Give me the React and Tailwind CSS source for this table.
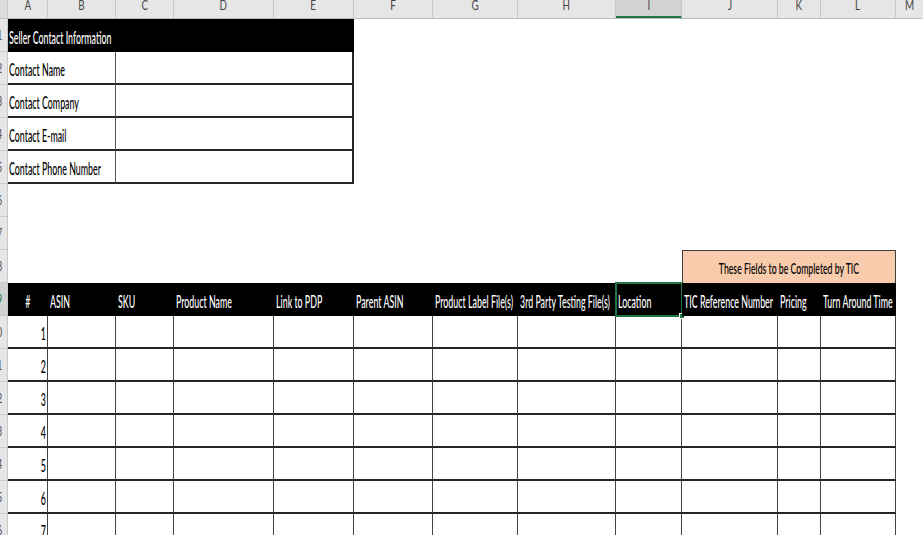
import React from 'react';

const cols = [
  { k: 'A', w: 'w-[40px]' },
  { k: 'B', w: 'w-[68px]' },
  { k: 'C', w: 'w-[58px]' },
  { k: 'D', w: 'w-[100px]' },
  { k: 'E', w: 'w-[80px]' },
  { k: 'F', w: 'w-[79px]' },
  { k: 'G', w: 'w-[85px]' },
  { k: 'H', w: 'w-[98px]' },
  { k: 'I', w: 'w-[66px]' },
  { k: 'J', w: 'w-[96px]' },
  { k: 'K', w: 'w-[43px]' },
  { k: 'L', w: 'w-[75px]' },
];

const headers = [
  { label: '#', align: 'center' },
  { label: 'ASIN' },
  { label: 'SKU' },
  { label: 'Product Name' },
  { label: 'Link to PDP' },
  { label: 'Parent ASIN' },
  { label: 'Product Label File(s)' },
  { label: '3rd Party Testing File(s)' },
  { label: 'Location', selected: true },
  { label: 'TIC Reference Number' },
  { label: 'Pricing' },
  { label: 'Turn Around Time' },
];

const contactRows = ['Contact Name', 'Contact Company', 'Contact E-mail', 'Contact Phone Number'];

const font = { fontFamily: 'Lato, "Liberation Sans", sans-serif' };

const Txt = ({ children, className = '' }) => (
  <span className={`inline-block whitespace-nowrap leading-none ${className}`}>{children}</span>
);

const RowHead = ({ n, active }) => (
  <div
    className={`w-[8px] shrink-0 h-full flex justify-end items-center overflow-hidden pr-[5px] border-b border-r border-[#c8c8c8] ${
      active ? 'bg-[#d2d2d2] text-[#217346]' : 'bg-[#e6e6e6] text-[#555]'
    }`}
  >
    <Txt className="text-[14px] scale-x-[0.6] origin-right">{n}</Txt>
  </div>
);

const Row = ({ n, active, children }) => (
  <div className="flex h-[33px] shrink-0">
    <RowHead n={n} active={active} />
    {children}
  </div>
);

export default function App() {
  return (
    <div className="w-[923px] h-[535px] overflow-hidden bg-white flex flex-col font-medium" style={font}>
      {/* column letters */}
      <div className="flex h-[19px] shrink-0 bg-[#e6e6e6] border-b border-[#bdbdbd]">
        <div className="w-[8px] shrink-0 border-r border-[#c8c8c8] bg-[#dcdcdc]" />
        {cols.map((c) => (
          <div
            key={c.k}
            className={`${c.w} shrink-0 flex justify-center items-start overflow-hidden border-r border-[#c8c8c8] text-[#444] ${
              c.k === 'I' ? 'bg-[#d2d2d2] border-b-2 border-b-[#217346]' : ''
            }`}
          >
            <Txt className="text-[14px] -mt-[2px] scale-x-[0.7] font-normal">{c.k}</Txt>
          </div>
        ))}
        <div className="flex-1 flex justify-center items-start overflow-hidden text-[#444]">
          <Txt className="text-[14px] -mt-[2px] scale-x-[0.7] font-normal">M</Txt>
        </div>
      </div>

      {/* row 1 */}
      <Row n={1}>
        <div className="w-[346px] shrink-0 bg-black text-white flex items-center pl-[1px] pt-[3px]">
          <Txt className="text-[17px] scale-x-[0.52] origin-left">Seller Contact Information</Txt>
        </div>
      </Row>

      {contactRows.map((label, i) => (
        <Row key={label} n={i + 2}>
          <div className="w-[108px] shrink-0 flex items-center pl-[1px] pt-[3px] border-r border-b-2 border-r-[#555] border-b-[#262626] text-black">
            <Txt className="text-[17px] scale-x-[0.52] origin-left">{label}</Txt>
          </div>
          <div className="w-[238px] shrink-0 border-r-2 border-b-2 border-[#262626]" />
        </Row>
      ))}

      <Row n={6} />
      <Row n={7} />

      {/* row 8 */}
      <Row n={8}>
        <div className="w-[674px] shrink-0" />
        <div className="w-[214px] shrink-0 bg-[#f8cbad] border-t border-l border-r border-[#404040] flex items-center justify-center pt-[3px] text-black">
          <Txt className="text-[15px] scale-x-[0.58]">These Fields to be Completed by TIC</Txt>
        </div>
      </Row>

      {/* row 9 */}
      <Row n={9} active>
        {headers.map((h, i) => (
          <div
            key={h.label}
            className={`${cols[i].w} shrink-0 bg-black text-white flex items-center pt-[3px] relative ${
              h.align === 'center' ? 'justify-center' : 'pl-[2px]'
            }`}
          >
            <Txt className={`text-[17px] scale-x-[0.52] ${h.align === 'center' ? '' : 'origin-left'}`}>{h.label}</Txt>
            {h.selected && (
              <div className="absolute -left-[1px] -top-[1px] -right-[1px] -bottom-[1px] border-2 border-[#217346]">
                <div className="absolute -right-[4px] -bottom-[4px] w-[6px] h-[6px] bg-[#217346] border border-white" />
              </div>
            )}
          </div>
        ))}
      </Row>

      {[1, 2, 3, 4, 5, 6, 7].map((n) => (
        <Row key={n} n={n + 9}>
          {cols.map((c, i) => (
            <div
              key={c.k}
              className={`${c.w} shrink-0 border-r border-b-2 border-r-[#444] border-b-[#262626] flex items-center justify-end pr-[1px] pt-[3px] text-black`}
            >
              {i === 0 && <Txt className="text-[17px] scale-x-[0.52] origin-right">{n}</Txt>}
            </div>
          ))}
        </Row>
      ))}
    </div>
  );
}
